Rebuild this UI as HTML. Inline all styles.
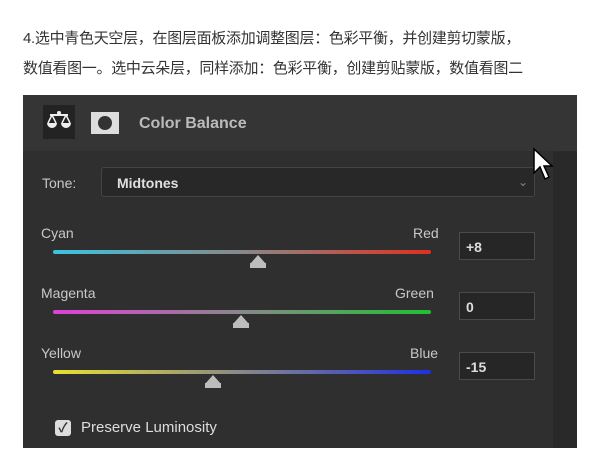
<!DOCTYPE html><html><head><meta charset="utf-8"><style>
body{margin:0;width:600px;height:456px;background:#fff;position:relative;overflow:hidden;font-family:"Liberation Sans","Noto Sans CJK SC",sans-serif}
.t{position:absolute;left:23px;font-size:15px;color:#333;white-space:nowrap;letter-spacing:-0.3px}
.p{position:absolute;left:23px;top:95px;width:554px;height:353px;background:#2f2f2f}
.h{position:absolute;left:0;top:0;width:554px;height:56px;background:#353535}
.rs{position:absolute;left:530px;top:56px;width:24px;height:297px;background:#292929}
.a{position:absolute;color:#c8c8c8;font-size:14px}
.bar{position:absolute;left:30px;width:378px;height:4px;border-radius:2px}
.th{position:absolute;width:0;height:0}
.th:before{content:"";position:absolute;left:-8px;top:0;border-left:8px solid transparent;border-right:8px solid transparent;border-bottom:9px solid #bdbdbd}
.th:after{content:"";position:absolute;left:-8px;top:8px;width:16px;height:5px;background:#bdbdbd}
.in{position:absolute;left:436px;width:76px;height:28px;border:1px solid #4a4a4a;background:#262626;color:#ddd;font-size:14px;font-weight:bold;line-height:28px;padding-left:6px;box-sizing:border-box}
</style></head><body>
<div class="t" style="top:27px">4.选中青色天空层，在图层面板添加调整图层：色彩平衡，并创建剪切蒙版，</div>
<div class="t" style="top:57px">数值看图一。选中云朵层，同样添加：色彩平衡，创建剪贴蒙版，数值看图二</div>
<div class="p">
<div class="h"></div>
<div class="rs"></div>
<div style="position:absolute;left:20px;top:10px;width:32px;height:34px;background:#232323"></div>
<svg style="position:absolute;left:23px;top:15px" width="26" height="22" viewBox="0 0 26 22"><path d="M4 5 H22 M13 2 V5" stroke="#eee" stroke-width="2"/><circle cx="13" cy="3" r="2" fill="#eee"/><path d="M1 13 A5 5 0 0 0 11 13 Z M15 13 A5 5 0 0 0 25 13 Z" fill="#eee"/><path d="M6 5 L2 13 M6 5 L10 13 M20 5 L16 13 M20 5 L24 13" stroke="#eee" stroke-width="1.5" fill="none"/></svg>
<div style="position:absolute;left:68px;top:17px;width:28px;height:22px;background:#ddd"><div style="position:absolute;left:7px;top:4px;width:14px;height:14px;border-radius:50%;background:#333"></div></div>
<div class="a" style="left:116px;top:20px;font-size:16px;font-weight:bold;color:#bbb">Color Balance</div>
<div class="a" style="left:19px;top:80px">Tone:</div>
<div style="position:absolute;left:78px;top:72px;width:434px;height:30px;border:1px solid #444;border-radius:3px;background:#282828;box-sizing:border-box"></div>
<div class="a" style="left:94px;top:80px;color:#e0e0e0;font-weight:bold">Midtones</div>
<div class="a" style="left:495px;top:80px;color:#888;font-size:12px">⌄</div>
<svg style="position:absolute;left:508px;top:52px" width="24" height="36" viewBox="0 0 24 36"><path d="M3 2 L3 26 L9 20 L14 32 L18 30 L13 19 L21 19 Z" fill="#fff" stroke="#000" stroke-width="1.5"/></svg>
<div class="a" style="left:18px;top:130px">Cyan</div><div class="a" style="left:390px;top:130px">Red</div>
<div class="bar" style="top:155px;background:linear-gradient(90deg,#3bc3e0,#888 50%,#e03020)"></div>
<div class="th" style="left:235px;top:160px"></div>
<div class="in" style="top:137px">+8</div>
<div class="a" style="left:18px;top:190px">Magenta</div><div class="a" style="left:372px;top:190px">Green</div>
<div class="bar" style="top:215px;background:linear-gradient(90deg,#e040d8,#888 50%,#20c030)"></div>
<div class="th" style="left:218px;top:220px"></div>
<div class="in" style="top:197px">0</div>
<div class="a" style="left:18px;top:250px">Yellow</div><div class="a" style="left:387px;top:250px">Blue</div>
<div class="bar" style="top:275px;background:linear-gradient(90deg,#e8e030,#888 50%,#2030e0)"></div>
<div class="th" style="left:190px;top:280px"></div>
<div class="in" style="top:257px">-15</div>
<div style="position:absolute;left:32px;top:325px;width:16px;height:16px;border-radius:3px;background:#ddd;color:#333;font-size:13px;font-weight:bold;text-align:center;line-height:16px">✓</div>
<div class="a" style="left:58px;top:324px;color:#ddd;font-size:15px">Preserve Luminosity</div>
</div>
</body></html>
